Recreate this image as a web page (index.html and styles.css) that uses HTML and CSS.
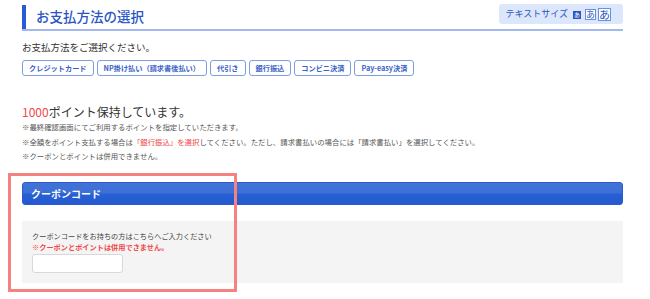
FILE: index.html
```html
<!DOCTYPE html>
<html lang="ja">
<head>
<meta charset="utf-8">
<link rel="stylesheet" href="styles.css">
</head>
<body>
<div class="page">
  <div class="heading">
    <h2 class="heading-title">お支払方法の選択</h2>
    <div class="textsize">
      <span class="textsize-label">テキストサイズ</span>
      <span class="ts ts-s ts-on">あ</span>
      <span class="ts ts-m">あ</span>
      <span class="ts ts-l">あ</span>
    </div>
  </div>
  <p class="lead">お支払方法をご選択ください。</p>
  <div class="methods">
    <span class="method">クレジットカード</span>
    <span class="method">NP掛け払い（請求書後払い）</span>
    <span class="method">代引き</span>
    <span class="method">銀行振込</span>
    <span class="method">コンビニ決済</span>
    <span class="method">Pay-easy決済</span>
  </div>
  <p class="points"><span class="red">1000</span>ポイント保持しています。</p>
  <ul class="notes">
    <li>※最終確認画面にてご利用するポイントを指定していただきます。</li>
    <li>※全額をポイント支払する場合は<span class="red">「銀行振込」を選択</span>してください。ただし、請求書払いの場合には「請求書払い」を選択してください。</li>
    <li>※クーポンとポイントは併用できません。</li>
  </ul>
  <div class="coupon">
    <div class="coupon-head">クーポンコード</div>
    <div class="coupon-body">
      <p class="coupon-text">クーポンコードをお持ちの方はこちらへご入力ください</p>
      <p class="coupon-warn">※クーポンとポイントは併用できません。</p>
      <input class="coupon-input" type="text">
    </div>
    <div class="highlight"></div>
  </div>
</div>
</body>
</html>
```

FILE: styles.css
```css
* { box-sizing: border-box; }
html, body { margin: 0; padding: 0; background: #fff; }
body {
  font-family: "Noto Sans CJK JP", "Noto Sans", sans-serif;
  color: #333;
  width: 650px;
  height: 299px;
  overflow: hidden;
}
.page {
  margin-left: 22px;
  width: 601px;
  padding-top: 4px;
}
.heading {
  display: flex;
  justify-content: space-between;
  align-items: flex-start;
  border-bottom: 2px solid #a3b8ef;
  height: 27px;
}
.heading-title {
  margin: 1px 0 0 0;
  height: 24px;
  border-left: 4px solid #2a5bd7;
  padding-left: 10px;
  font-size: 13.5px;
  line-height: 22px;
  font-weight: 500;
  color: #2a55c4;
}
.textsize {
  display: flex;
  align-items: center;
  gap: 2px;
  background: #dde7fc;
  border-radius: 3px;
  height: 20px;
  padding: 0 12px 0 7px;
}
.textsize-label {
  font-size: 9px;
  color: #2a55c4;
  margin-right: 3px;
  line-height: 20px;
}
.ts {
  display: inline-flex;
  align-items: center;
  justify-content: center;
  border: 1px solid #6a8ee0;
  color: #2a55c4;
  background: #fff;
  line-height: 1;
}
.ts-s { width: 8px; height: 8px; font-size: 6px; margin-top: 2px; margin-right: 2px; }
.ts-m { width: 11px; height: 11px; font-size: 9px; margin-top: 1px; }
.ts-l { width: 13px; height: 13px; font-size: 11px; }
.ts-on { background: #2a55c4; color: #fff; border-color: #2a55c4; }
.lead {
  margin: 9px 0 0 0;
  font-size: 9.5px;
  line-height: 14px;
  color: #333;
}
.methods {
  display: flex;
  gap: 3px;
  margin-top: 6px;
}
.method {
  border: 1px solid #7f9de3;
  border-radius: 3px;
  font-size: 7.2px;
  font-weight: 700;
  color: #3a62c6;
  height: 16px;
  line-height: 14px;
  padding: 0 6px;
}
.red { color: #f0484a; }
.points {
  margin: 28px 0 0 0;
  font-size: 12px;
  line-height: 16px;
  color: #333;
}
.notes {
  list-style: none;
  margin: 0;
  padding: 0;
  font-size: 7.4px;
  line-height: 14.5px;
  color: #555;
}
.coupon {
  position: relative;
  margin-top: 18px;
}
.coupon-head {
  height: 23px;
  border-radius: 3px;
  background: linear-gradient(#4072d8 0%, #3d6fd6 48%, #2660d4 52%, #2459cf 100%);
  border: 1px solid #2a5bd0;
  color: #fff;
  font-size: 10px;
  font-weight: 700;
  line-height: 21px;
  padding-left: 8px;
}
.coupon-body {
  margin-top: 16px;
  background: #f4f4f4;
  height: 62px;
  padding: 10px 10px 0 10px;
}
.coupon-text {
  margin: 0;
  font-size: 7.2px;
  line-height: 11px;
  color: #444;
}
.coupon-warn {
  margin: 0;
  font-size: 7.2px;
  line-height: 11px;
  font-weight: 700;
  color: #f0484a;
}
.coupon-input {
  display: block;
  margin-top: 1px;
  width: 91px;
  height: 19px;
  border: 1px solid #d8d8d8;
  border-radius: 3px;
  background: #fff;
  padding: 0;
}
.highlight {
  position: absolute;
  left: -14px;
  top: -9px;
  width: 229px;
  height: 119px;
  border: 3px solid #f58181;
  pointer-events: none;
}
```
